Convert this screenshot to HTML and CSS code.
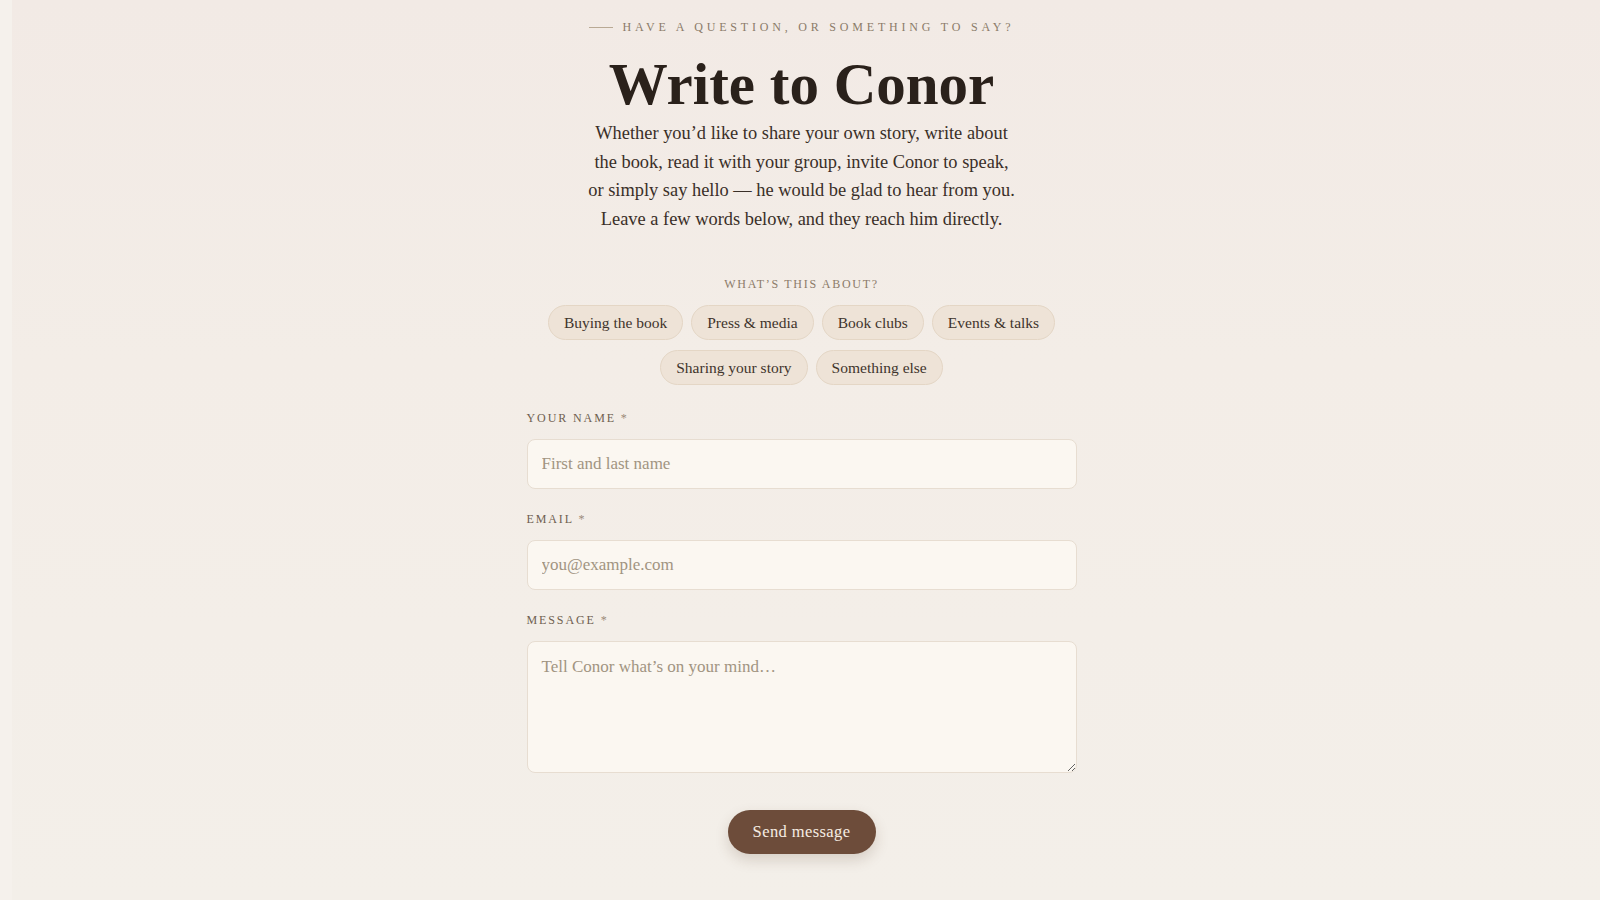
FILE: index.html
```html
<!DOCTYPE html>
<html lang="en">
<head>
    <meta charset="UTF-8">
    <meta name="viewport" content="width=device-width, initial-scale=1.0">
    <title>Write to Conor</title>
    <link rel="stylesheet" href="styles.css">
</head>
<body>
    <!-- Contact section -->
    <main class="contact">
        <header class="contact-head">
            <p class="eyebrow"><span class="eyebrow-rule"></span>Have a question, or something to say?</p>
            <h1>Write to Conor</h1>
            <p class="intro">
                Whether you’d like to share your own story, write about<br>
                the book, read it with your group, invite Conor to speak,<br>
                or simply say hello — he would be glad to hear from you.<br>
                Leave a few words below, and they reach him directly.
            </p>
        </header>

        <!-- Topic chips -->
        <div class="topics">
            <p class="topics-label">What’s this about?</p>
            <div class="chips">
                <button type="button" class="chip">Buying the book</button>
                <button type="button" class="chip">Press &amp; media</button>
                <button type="button" class="chip">Book clubs</button>
                <button type="button" class="chip">Events &amp; talks</button>
                <button type="button" class="chip">Sharing your story</button>
                <button type="button" class="chip">Something else</button>
            </div>
        </div>

        <!-- Message form -->
        <form class="contact-form" onsubmit="return false">
            <div class="field">
                <label for="name">Your name <span class="req">*</span></label>
                <input type="text" id="name" placeholder="First and last name">
            </div>
            <div class="field">
                <label for="email">Email <span class="req">*</span></label>
                <input type="email" id="email" placeholder="you@example.com">
            </div>
            <div class="field">
                <label for="message">Message <span class="req">*</span></label>
                <textarea id="message" placeholder="Tell Conor what’s on your mind…"></textarea>
            </div>
            <div class="form-actions">
                <button type="submit" class="send">Send message</button>
            </div>
        </form>
    </main>
</body>
</html>
```

FILE: styles.css
```css
/* Page base: warm paper tone with a pale strip down the left edge */
body {
    margin: 0;
    padding-left: 3px;
    min-height: 100vh;
    box-sizing: border-box;
    font-family: "Liberation Serif", "DejaVu Serif", serif;
    color: #3a2f28;
    background:
        linear-gradient(90deg, #f5f1ec 0, #f5f1ec 12px, transparent 12px),
        linear-gradient(180deg, #f2eae5 0%, #f3ede7 40%, #f3efe9 100%);
}

.contact {
    width: 550px;
    margin: 0 auto;
    padding-top: 20px;
}

/* Heading block */
.contact-head {
    text-align: center;
}

.eyebrow {
    margin: 0;
    font-size: 12px;
    letter-spacing: 3.8px;
    text-transform: uppercase;
    color: #8b7b69;
    display: flex;
    align-items: center;
    justify-content: center;
    gap: 10px;
}

.eyebrow-rule {
    display: inline-block;
    width: 24px;
    height: 1px;
    background: #b9a994;
}

h1 {
    margin: 16px 0 0;
    font-size: 59px;
    line-height: 66px;
    font-weight: 700;
    color: #2a211b;
}

.intro {
    margin: 2px 0 0;
    font-size: 18.4px;
    line-height: 28.6px;
    color: #3a2f28;
}

/* Topic chips */
.topics {
    margin-top: 44px;
    text-align: center;
}

.topics-label {
    margin: 0;
    font-size: 12px;
    letter-spacing: 1.7px;
    text-transform: uppercase;
    color: #8b7b69;
}

.chips {
    margin-top: 13px;
    display: flex;
    flex-wrap: wrap;
    justify-content: center;
    gap: 10px 8px;
}

.chip {
    font-family: inherit;
    font-size: 15.5px;
    color: #3f342c;
    background: #eee3d7;
    border: 1px solid #e4d6c5;
    border-radius: 999px;
    padding: 0 15px;
    height: 35px;
    cursor: pointer;
}

/* Form */
.contact-form {
    margin-top: 26px;
}

.field {
    margin-bottom: 23px;
}

.field label {
    display: block;
    font-size: 12px;
    letter-spacing: 1.9px;
    text-transform: uppercase;
    color: #6f5f50;
    margin-bottom: 13px;
}

.req {
    color: #9a8a78;
}

.field input,
.field textarea {
    display: block;
    width: 100%;
    box-sizing: border-box;
    font-family: inherit;
    font-size: 17px;
    color: #3a2f28;
    background: #fbf7f1;
    border: 1px solid #e7ddd1;
    border-radius: 8px;
    padding: 0 14px;
}

.field input {
    height: 50px;
}

.field textarea {
    height: 132px;
    padding-top: 15px;
    resize: vertical;
}

.field input::placeholder,
.field textarea::placeholder {
    color: #a19481;
}

.form-actions {
    padding-top: 14px;
    display: flex;
    justify-content: center;
}

.send {
    font-family: inherit;
    font-size: 16.5px;
    letter-spacing: 0.4px;
    color: #f6ede3;
    background: #6d4c3a;
    border: none;
    border-radius: 999px;
    width: 148px;
    height: 44px;
    cursor: pointer;
    box-shadow: 0 6px 14px rgba(90, 60, 40, 0.18);
}
```
